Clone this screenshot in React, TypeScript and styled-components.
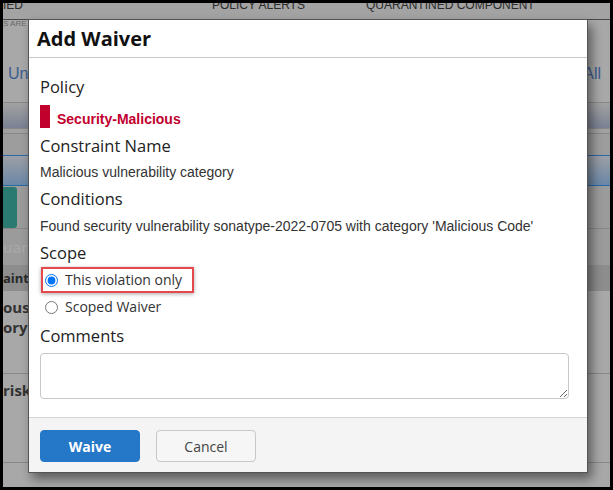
import React from "react";
import styled, { createGlobalStyle } from "styled-components";

const GlobalStyle = createGlobalStyle`
  html, body { margin: 0; padding: 0; background: #000; }
  body { font-family: "Liberation Sans", Arial, sans-serif; }
  #root { padding: 3px; width: 613px; height: 490px; box-sizing: border-box; }
`;

/* ---------- page behind the dialog ---------- */

const Page = styled.div`
  position: relative;
  width: 607px;
  height: 484px;
  overflow: hidden;
  background: #fff;
  font-family: "Liberation Sans", Arial, sans-serif;
`;

const TopNav = styled.nav`
  height: 16px;
  background: #f7f7f7;
  border-bottom: 1px solid #707070;
  display: grid;
  grid-template-columns: 209px 154px 1fr;
  overflow: hidden;
`;

const NavItem = styled.span`
  margin-top: -5px;
  font-size: 12px;
  line-height: 14px;
  color: #444;
  text-transform: uppercase;
  white-space: nowrap;
`;

const TopSection = styled.div`
  height: 82px;
  display: flex;
  flex-direction: column;
`;

const SubText = styled.div`
  font-size: 8px;
  line-height: 8px;
  color: #a0a0a0;
  text-transform: uppercase;
`;

const LinksRow = styled.div`
  margin-top: 37px;
  display: flex;
  justify-content: space-between;
  padding: 0 9px 0 5px;
  font-size: 16px;
  line-height: 18px;
  color: #5b8fd9;
`;

const GridHead = styled.div`
  height: 25px;
  border-top: 1px solid #cfcfcf;
  border-bottom: 1px solid #cfcfcf;
  background: linear-gradient(#f5f5f5, #bac5e0);
`;

const ThinStrip = styled.div`
  height: 4px;
  background: #f4f4f4;
  border-bottom: 1px solid #cfcfcf;
`;

const FilterRow = styled.div`
  height: 21px;
  background: #efefef;
  border-bottom: 1px solid #3fa0ff;
`;

const SelectedRow = styled.div`
  height: 29px;
  background: linear-gradient(#eef2fb, #a2cefe);
  border-bottom: 1px solid #3fa0ff;
`;

const ActionRow = styled.div`
  height: 42px;
  background: #ececec;
  border-bottom: 1px solid #cfcfcf;
  display: flex;
  align-items: flex-end;
`;

const TealButton = styled.div`
  width: 14px;
  height: 41px;
  background: #41b9ad;
  border-radius: 0 3px 3px 0;
`;

const GroupRow = styled.div`
  height: 36px;
  background: #ececec;
  display: flex;
  align-items: center;
  font: 600 15px/20px "Open Sans", sans-serif;
  color: #fdfdfd;
`;

const ColumnHead = styled.div`
  height: 26px;
  background: #d6d6d6;
  display: flex;
  align-items: center;
  font: 700 13px/18px "Open Sans", sans-serif;
  color: #404040;
`;

const DataRow = styled.div<{ $h: number }>`
  height: ${(p) => p.$h}px;
  border-bottom: 1px solid #cfcfcf;
  padding-top: 6px;
  box-sizing: border-box;
  font: 700 15px/20px "Open Sans", sans-serif;
  color: #4d4d4d;
`;

/* ---------- dialog ---------- */

const Overlay = styled.div`
  position: absolute;
  inset: 0;
  background: rgba(0, 0, 0, 0.34);
  display: flex;
  align-items: flex-start;
  padding: 16px 0 0 25px;
`;

const Dialog = styled.div`
  width: 560px;
  box-sizing: border-box;
  background: #fff;
  border: 1px solid #555;
  box-shadow: 4px 6px 10px rgba(0, 0, 0, 0.45);
  display: flex;
  flex-direction: column;
`;

const DialogHeader = styled.header`
  padding: 5px 8px;
  border-bottom: 1px solid #c8c8c8;
`;

const Title = styled.h2`
  margin: 0;
  font: 700 20px/27px "Open Sans", sans-serif;
  color: #111;
`;

const DialogBody = styled.div`
  padding: 18px 18px 18px 11px;
  display: flex;
  flex-direction: column;
`;

const SectionLabel = styled.h3<{ $gap?: number }>`
  margin: ${(p) => p.$gap ?? 0}px 0 0;
  font: 400 16.5px/22px "Open Sans", sans-serif;
  color: #222;
`;

const ValueText = styled.p<{ $gap: number }>`
  margin: ${(p) => p.$gap}px 0 0;
  font-size: 14px;
  line-height: 20px;
  color: #333;
`;

const PolicyTag = styled.div`
  margin-top: 7px;
  border-left: 10px solid #c1002e;
  padding: 6px 0 1px 7px;
  font-size: 14px;
  line-height: 16px;
  font-weight: 700;
  color: #c1002e;
`;

const HighlightBox = styled.div`
  margin: 3px 0 0 1px;
  align-self: flex-start;
  border: 2px solid #e5484d;
  box-shadow: 0 1px 4px rgba(0, 0, 0, 0.35);
  padding: 0 10px 0 0;
`;

const RadioRow = styled.label<{ $boxed?: boolean }>`
  display: flex;
  align-items: center;
  height: ${(p) => (p.$boxed ? 22 : 24)}px;
  margin-top: ${(p) => (p.$boxed ? 0 : 2)}px;
  padding-left: ${(p) => (p.$boxed ? 2 : 5)}px;
  gap: 7px;
  font: 400 14px/20px "Open Sans", sans-serif;
  color: #333;
`;

const Radio = styled.input`
  margin: 0;
  width: 13px;
  height: 13px;
`;

const CommentBox = styled.textarea`
  margin-top: 6px;
  width: 100%;
  height: 46px;
  box-sizing: border-box;
  border: 1px solid #c8c8c8;
  border-radius: 4px;
  background: #fff;
  font: 14px "Open Sans", sans-serif;
`;

const DialogFooter = styled.footer`
  border-top: 1px solid #d4d4d4;
  background: #f4f4f4;
  padding: 12px 11px 10px;
  display: flex;
  gap: 16px;
`;

const Button = styled.button<{ $primary?: boolean }>`
  width: 100px;
  height: 32px;
  border-radius: 4px;
  font: ${(p) => (p.$primary ? 700 : 400)} 14px "Open Sans", sans-serif;
  color: ${(p) => (p.$primary ? "#fff" : "#444")};
  background: ${(p) => (p.$primary ? "#2577c7" : "#f6f6f6")};
  border: 1px solid ${(p) => (p.$primary ? "#2577c7" : "#c8c8c8")};
  cursor: pointer;
`;

export default function App() {
  return (
    <>
      <GlobalStyle />
      <Page>
        <TopNav>
          <NavItem>ied</NavItem>
          <NavItem>Policy Alerts</NavItem>
          <NavItem>Quarantined Component</NavItem>
        </TopNav>
        <TopSection>
          <SubText>s are</SubText>
          <LinksRow>
            <span>Un</span>
            <span>All</span>
          </LinksRow>
        </TopSection>
        <GridHead />
        <ThinStrip />
        <FilterRow />
        <SelectedRow />
        <ActionRow>
          <TealButton />
        </ActionRow>
        <GroupRow>uar</GroupRow>
        <ColumnHead>aint</ColumnHead>
        <DataRow $h={83}>
          ous
          <br />
          ory
        </DataRow>
        <DataRow $h={89}>risk</DataRow>

        <Overlay>
          <Dialog role="dialog" aria-label="Add Waiver">
            <DialogHeader>
              <Title>Add Waiver</Title>
            </DialogHeader>
            <DialogBody>
              <SectionLabel>Policy</SectionLabel>
              <PolicyTag>Security-Malicious</PolicyTag>
              <SectionLabel $gap={7}>Constraint Name</SectionLabel>
              <ValueText $gap={5}>Malicious vulnerability category</ValueText>
              <SectionLabel $gap={6}>Conditions</SectionLabel>
              <ValueText $gap={6}>
                Found security vulnerability sonatype-2022-0705 with category 'Malicious Code'
              </ValueText>
              <SectionLabel $gap={6}>Scope</SectionLabel>
              <HighlightBox>
                <RadioRow $boxed>
                  <Radio type="radio" name="scope" defaultChecked />
                  This violation only
                </RadioRow>
              </HighlightBox>
              <RadioRow>
                <Radio type="radio" name="scope" />
                Scoped Waiver
              </RadioRow>
              <SectionLabel $gap={6}>Comments</SectionLabel>
              <CommentBox />
            </DialogBody>
            <DialogFooter>
              <Button $primary>Waive</Button>
              <Button>Cancel</Button>
            </DialogFooter>
          </Dialog>
        </Overlay>
      </Page>
    </>
  );
}
